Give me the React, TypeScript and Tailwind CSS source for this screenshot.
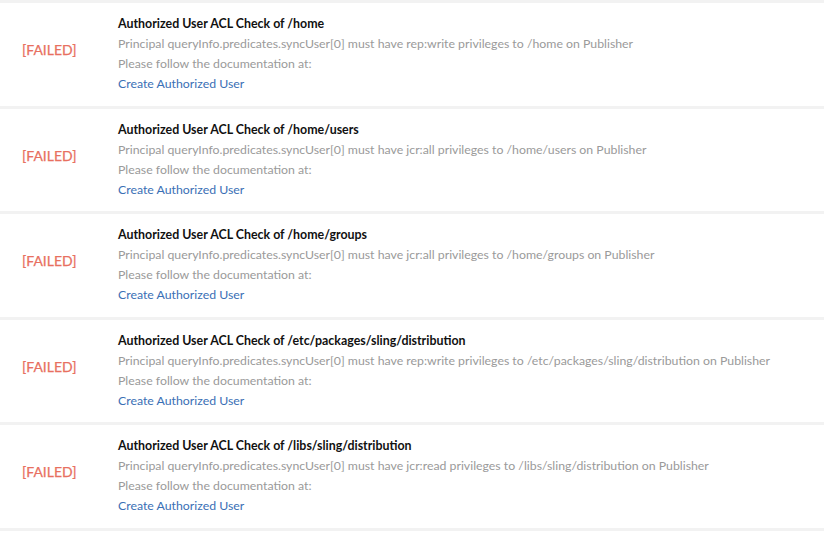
const checks = [
  { path: '/home', privilege: 'rep:write' },
  { path: '/home/users', privilege: 'jcr:all' },
  { path: '/home/groups', privilege: 'jcr:all' },
  { path: '/etc/packages/sling/distribution', privilege: 'rep:write' },
  { path: '/libs/sling/distribution', privilege: 'jcr:read' },
];

function CheckRow({ path, privilege }: { path: string; privilege: string }) {
  return (
    <div className="flex h-[102.5px] bg-white">
      <div className="w-[118px] shrink-0 pl-[22px] pt-[34px]">
        <span className="text-[14px] leading-[20px] text-[#e8705f] [-webkit-text-stroke:0.25px_#e8705f]">[FAILED]</span>
      </div>
      <div className="pt-[11px]">
        <div className="text-[12.4px] font-bold leading-[20px] text-[#111]">Authorized User ACL Check of {path}</div>
        <div className="text-[12.3px] leading-[20px] text-[#9a9a9a]">
          Principal queryInfo.predicates.syncUser[0] must have {privilege} privileges to {path} on Publisher
        </div>
        <div className="text-[12.3px] leading-[20px] text-[#9a9a9a]">Please follow the documentation at:</div>
        <a href="#" className="block text-[12.3px] leading-[20px] text-[#3a6fb5]">
          Create Authorized User
        </a>
      </div>
    </div>
  );
}

export default function App() {
  return (
    <div className="flex min-h-screen flex-col gap-[3px] bg-[#f2f2f2] pt-[3px] font-['Lato',sans-serif]">
      {checks.map(c => (
        <CheckRow key={c.path} {...c} />
      ))}
      {/* next row, below the fold */}
      <div className="flex-1 bg-white" />
    </div>
  );
}
